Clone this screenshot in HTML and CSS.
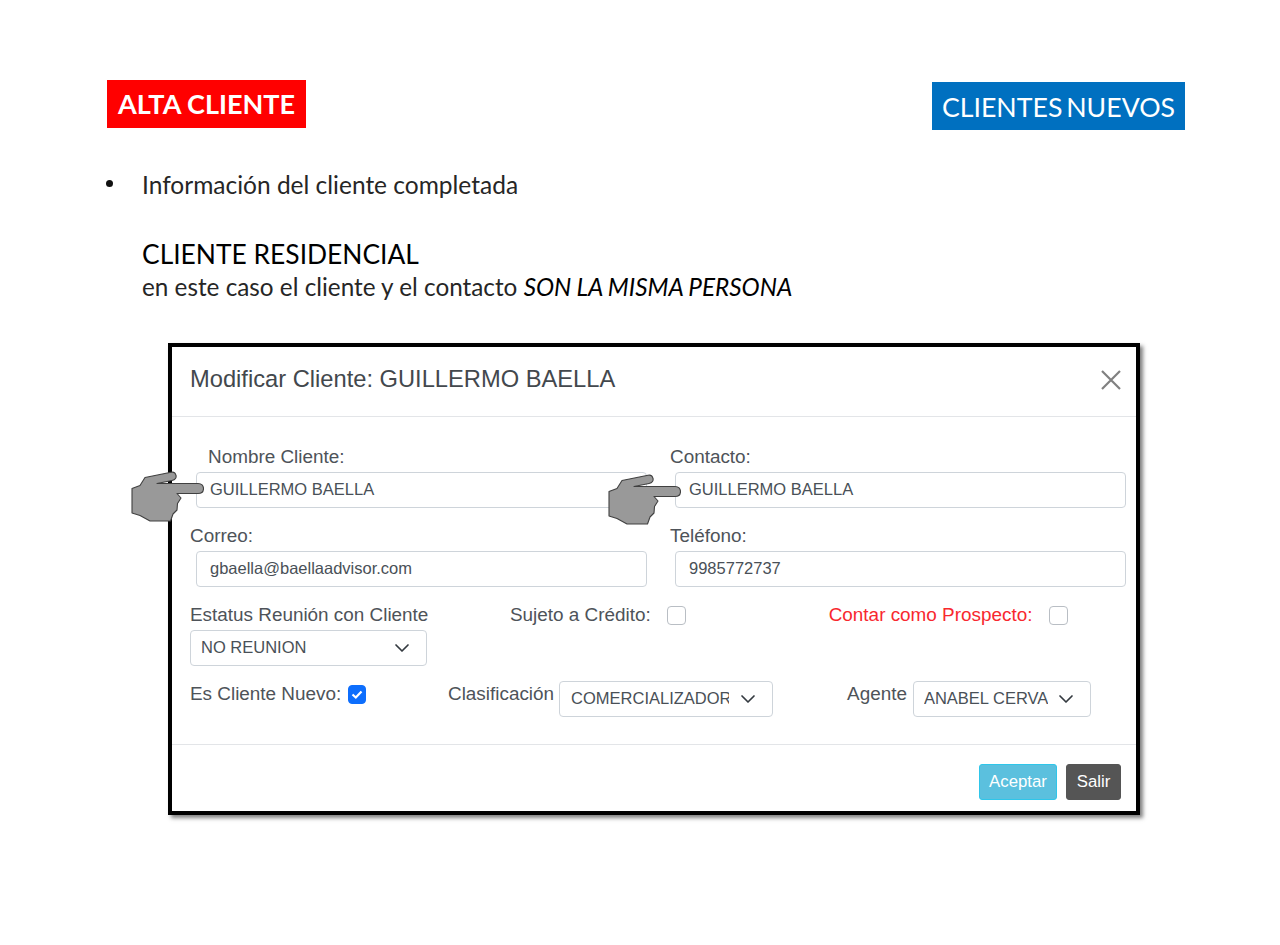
FILE: index.html
```html
<!DOCTYPE html>
<html lang="es">
  <head>
    <meta charset="UTF-8" />
    <title>Alta Cliente</title>
    <link rel="stylesheet" href="styles.css">
  </head>
  <body>
    <svg class="sprite" width="0" height="0">
      <symbol id="hand" viewBox="0 0 73 51">
        <path d="M1 17.500V42L9 44.500L19 50H39.500L42 43L46 39L46.500 32.500L50 27L46 22.500H67C70.500 22.500 72.500 20.500 72.500 17.500C72.500 14.500 70.500 12.500 67 12.500H26L41 9.500C44.500 8.800 45.500 6.500 45 4.500C44.500 2 42.500 0.800 40 1.300L14 6.500L9 14.500Z" fill="#999" stroke="#404040" stroke-width="1.100" stroke-linejoin="round" />
      </symbol>
      <symbol id="chevron" viewBox="0 0 16 16">
        <path d="M2 5l6 6 6-6" fill="none" stroke="#343a40" stroke-width="1.700" stroke-linecap="round" stroke-linejoin="round" />
      </symbol>
    </svg>

    <div class="slide">
      <div class="slide-top">
        <div class="tag-red">ALTA CLIENTE</div>
        <div class="tag-blue">CLIENTES NUEVOS</div>
      </div>

      <ul class="bullets">
        <li>Información del cliente completada</li>
      </ul>

      <div class="intro">
        <h2>CLIENTE RESIDENCIAL</h2>
        <p>en este caso el cliente y el contacto <em>SON LA MISMA PERSONA</em></p>
      </div>

      <div class="modal">
        <div class="modal-header">
          <h3>Modificar Cliente: GUILLERMO BAELLA</h3>
          <svg class="close" viewBox="0 0 20 20" width="20" height="20">
            <path d="M1 1L19 19M19 1L1 19" stroke="#808080" stroke-width="2.200" fill="none" />
          </svg>
        </div>

        <div class="modal-body">
          <div class="form-grid">
            <div class="field">
              <label class="label-indent">Nombre Cliente:</label>
              <div class="input-box">
                GUILLERMO BAELLA
                <svg class="hand hand-left"><use href="#hand" /></svg>
              </div>
            </div>
            <div class="field">
              <label>Contacto:</label>
              <div class="input-box">
                GUILLERMO BAELLA
                <svg class="hand hand-right"><use href="#hand" /></svg>
              </div>
            </div>
            <div class="field">
              <label>Correo:</label>
              <div class="input-box">gbaella@baellaadvisor.com</div>
            </div>
            <div class="field">
              <label>Teléfono:</label>
              <div class="input-box">9985772737</div>
            </div>
          </div>

          <div class="row-meeting">
            <div class="meeting">
              <label>Estatus Reunión con Cliente</label>
              <div class="select-box select-meeting">
                <span>NO REUNION</span>
                <svg class="chevron"><use href="#chevron" /></svg>
              </div>
            </div>
            <div class="check-group check-credit">
              <label>Sujeto a Crédito:</label>
              <span class="checkbox"></span>
            </div>
            <div class="check-group check-prospect">
              <label class="label-red">Contar como Prospecto:</label>
              <span class="checkbox"></span>
            </div>
          </div>

          <div class="row-client">
            <div class="check-group new-client">
              <label>Es Cliente Nuevo:</label>
              <span class="checkbox checked">
                <svg viewBox="0 0 18 18" width="18" height="18">
                  <path d="M4.500 9.500L7.800 12.500L13.500 6.500" fill="none" stroke="#fff" stroke-width="2.200" />
                </svg>
              </span>
            </div>
            <div class="select-group group-class">
              <label>Clasificación</label>
              <div class="select-box select-class">
                <span>COMERCIALIZADOR</span>
                <svg class="chevron"><use href="#chevron" /></svg>
              </div>
            </div>
            <div class="select-group group-agent">
              <label>Agente</label>
              <div class="select-box select-agent">
                <span>ANABEL CERVA</span>
                <svg class="chevron"><use href="#chevron" /></svg>
              </div>
            </div>
          </div>
        </div>

        <div class="modal-footer">
          <button class="btn btn-info">Aceptar</button>
          <button class="btn btn-dark">Salir</button>
        </div>
      </div>
    </div>
  </body>
</html>
```

FILE: styles.css
```css
* {
  margin: 0;
  padding: 0;
  box-sizing: border-box;
}

body {
  background-color: #fff;
  font-family: Lato, "Open Sans", sans-serif;
  color: #000;
  height: 945px;
  overflow: hidden;
}

.sprite {
  position: absolute;
}

.slide {
  padding-top: 80px;
}

.slide-top {
  display: flex;
  justify-content: space-between;
  align-items: flex-start;
  padding: 0 95px 0 107px;
}

.tag-red {
  width: 199px;
  height: 48px;
  background-color: #ff0000;
  color: #fff;
  font-size: 27px;
  font-weight: 700;
  line-height: 48px;
  text-align: center;
  white-space: nowrap;
}

.tag-blue {
  width: 253px;
  height: 48px;
  margin-top: 2px;
  background-color: #0070c0;
  color: #fff;
  font-size: 26.700px;
  word-spacing: -3px;
  line-height: 50px;
  text-align: center;
  white-space: nowrap;
}

.bullets {
  list-style: none;
  margin-top: 40px;
  padding-left: 142px;
  font-size: 24.500px;
  line-height: 30px;
  color: #262626;
}

.bullets li {
  position: relative;
}

.bullets li::before {
  content: "";
  position: absolute;
  left: -36px;
  top: 10px;
  width: 7px;
  height: 7px;
  border-radius: 50%;
  background-color: #111;
}

.intro {
  margin-top: 36px;
  padding-left: 142px;
}

.intro h2 {
  font-size: 26.400px;
  font-weight: 400;
  line-height: 36px;
}

.intro p {
  font-size: 24.300px;
  line-height: 30px;
  color: #262626;
}

.intro em {
  color: #000;
  word-spacing: -0.500px;
}

.modal {
  width: 972px;
  height: 472px;
  margin: 41px 0 0 168px;
  border: 4px solid #000;
  box-shadow: 3px 3px 4px rgba(0, 0, 0, 0.5);
  background-color: #fff;
  font-family: "Liberation Sans", Arial, sans-serif;
  color: #4e5359;
  display: flex;
  flex-direction: column;
}

.modal-header {
  height: 70px;
  padding: 0 15px 4px 18px;
  border-bottom: 1px solid #e3e5e8;
  display: flex;
  align-items: center;
  justify-content: space-between;
}

.modal-header h3 {
  font-size: 23.700px;
  font-weight: 400;
  color: #43484d;
}

.modal-body {
  height: 327px;
  padding: 29px 10px 0 18px;
  font-size: 18.900px;
}

label {
  line-height: 20px;
  white-space: nowrap;
}

.form-grid {
  display: grid;
  grid-template-columns: 457px 1fr;
  column-gap: 23px;
  row-gap: 17px;
}

.field label {
  display: block;
  height: 26px;
  line-height: 22px;
}

.label-indent {
  padding-left: 18px;
}

.input-box,
.select-box {
  border: 1px solid #ced4da;
  border-radius: 4px;
  background-color: #fff;
  font-size: 16.500px;
  color: #495057;
}

.input-box {
  position: relative;
  height: 36px;
  margin-left: 6px;
  padding: 0 12px 0 13px;
  line-height: 32px;
  white-space: nowrap;
}

.field:nth-child(even) .input-box {
  margin-left: 5px;
}

.hand {
  position: absolute;
  width: 73px;
  height: 51px;
}

.hand-left {
  left: -66px;
  top: -2px;
}

.hand-right {
  left: -68px;
  top: 1px;
}

.row-meeting {
  display: flex;
  align-items: flex-start;
  margin-top: 18px;
}

.meeting {
  width: 320px;
}

.meeting label {
  display: block;
  height: 25px;
}

.select-box {
  height: 36px;
  padding: 0 16px 2px 10px;
  display: flex;
  align-items: center;
  justify-content: space-between;
}

.select-box span {
  overflow: hidden;
  white-space: nowrap;
}

.chevron {
  flex: none;
  width: 16px;
  height: 16px;
  margin-top: 2px;
}

.select-meeting {
  width: 237px;
}

.check-group {
  display: flex;
  align-items: center;
}

.check-credit {
  gap: 16px;
}

.check-prospect {
  gap: 17px;
  margin-left: 143px;
}

.label-red {
  color: #f8282e;
}

.checkbox {
  width: 19px;
  height: 19px;
  border: 1px solid #b9bec4;
  border-radius: 4px;
  flex: none;
  display: block;
}

.checked {
  background-color: #0d6efd;
  border-color: #0d6efd;
  width: 18px;
}

.checked svg {
  display: block;
  margin: -1px 0 0 -1px;
}

.row-client {
  display: flex;
  align-items: center;
  margin-top: 15px;
}

.new-client {
  width: 258px;
  gap: 7px;
  margin-top: -10px;
}

.select-group {
  display: flex;
  align-items: center;
  gap: 5px;
}

.select-group label {
  margin-top: -10px;
}

.select-class {
  width: 214px;
  padding-left: 11px;
}

.select-class span {
  width: 158px;
}

.group-agent {
  gap: 6px;
  margin-left: 74px;
}

.select-agent {
  width: 178px;
}

.modal-footer {
  flex: 1;
  border-top: 1px solid #e3e5e8;
  padding: 19px 15px 0 0;
  display: flex;
  justify-content: flex-end;
  align-items: flex-start;
  gap: 9px;
}

.btn {
  height: 36px;
  border-radius: 3px;
  font-family: "Liberation Sans", Arial, sans-serif;
  font-size: 16.800px;
  color: #fff;
}

.btn-info {
  width: 78px;
  background-color: #5bc0de;
  border: 1px solid #2fc6ea;
}

.btn-dark {
  width: 55px;
  background-color: #555;
  border: 1px solid #555;
}
```
